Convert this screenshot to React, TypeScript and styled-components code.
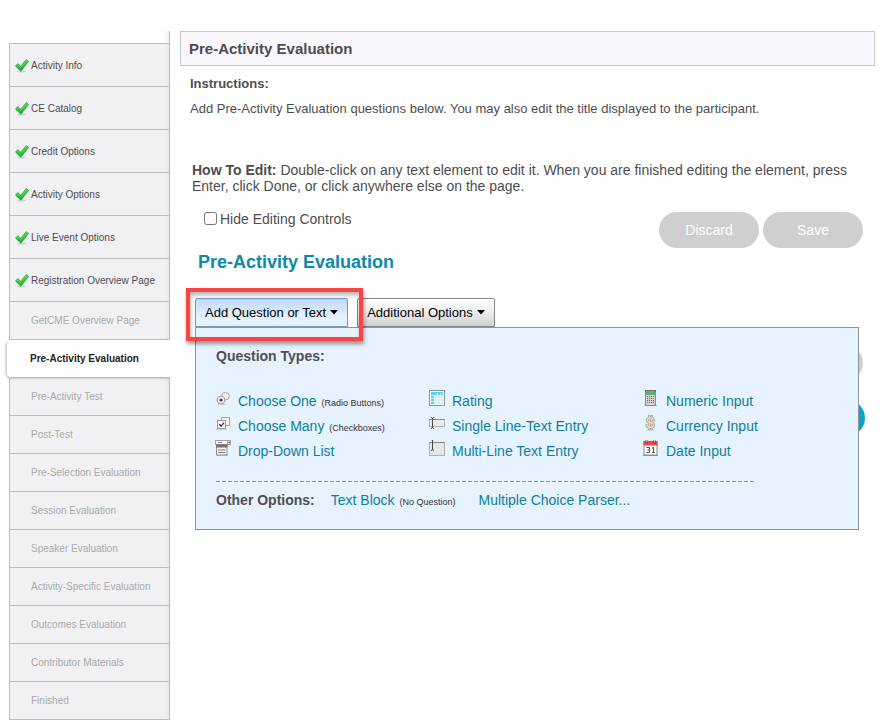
import React from "react";
import styled, { createGlobalStyle, css } from "styled-components";

const GlobalStyle = createGlobalStyle`
  *, *::before, *::after { box-sizing: border-box; }
  body {
    margin: 0;
    background: #fff;
    color: #4d4d4f;
    font-family: "Liberation Sans", Arial, sans-serif;
    font-size: 14px;
    line-height: 16px;
  }
  button, input { font-family: inherit; }
`;

const Page = styled.div`
  display: flex;
  align-items: flex-start;
  padding: 31px 7px 5px 9px;
`;

/* ---------- Sidebar ---------- */

const Sidebar = styled.nav`
  flex: 0 0 161px;
  padding-top: 12px;
  border-right: 1px solid #bdbdbf;
  background: linear-gradient(to left, #f1f1f3, #fff 5px);
`;

const StepList = styled.ol`
  margin: 0;
  padding: 0;
  list-style: none;
  border-top: 1px solid #bdbdbf;
`;

type StepState = "done" | "current" | "pending";

const Step = styled.li<{ $state: StepState }>`
  display: flex;
  height: ${(p) => (p.$state === "done" ? 43 : 38)}px;
  border-left: 1px solid #bdbdbf;
  border-bottom: 1px solid #bdbdbf;
  background: linear-gradient(to left, #e6e6e9, #f1f1f4 5px);

  ${(p) =>
    p.$state === "current" &&
    css`
      position: relative;
      margin: 0 -1px 0 -3px;
      border-left-color: #d4d4d6;
      border-radius: 5px 0 0 5px;
      background: #fff;
      box-shadow: -1px 1px 2px rgba(0, 0, 0, 0.16);
      clip-path: inset(-4px 0 -4px -4px);
    `}
`;

const StepLink = styled.a<{ $state: StepState }>`
  flex: 1;
  display: flex;
  align-items: center;
  gap: 2px;
  padding-top: ${(p) => (p.$state === "done" ? 2 : 0)}px;
  padding-left: ${(p) => ({ done: 5, current: 23, pending: 21 })[p.$state]}px;
  font-size: 10px;
  line-height: 12px;
  font-weight: ${(p) => (p.$state === "current" ? 700 : 400)};
  color: ${(p) => ({ done: "#4c4c4e", current: "#222", pending: "#a9a9ab" })[p.$state]};
  text-decoration: none;
  white-space: nowrap;
`;

/* ---------- Main column ---------- */

const Main = styled.main`
  flex: 1;
  min-width: 0;
  margin-left: 10px;
`;

const PageTitle = styled.h1`
  margin: 0;
  padding: 9px 8px 8px;
  border: 1px solid #c6c6c8;
  background: #f9f7fb;
  font-size: 15px;
  line-height: 16px;
`;

const Instructions = styled.section`
  padding: 10px 10px 0;
  font-size: 13px;
`;

const InstructionsTitle = styled.h2`
  margin: 0 0 9px;
  font-size: 13px;
  line-height: 16px;
`;

const Paragraph = styled.p`
  margin: 0;
`;

const Editor = styled.section`
  padding: 45px 12px 0;
`;

const ControlsRow = styled.div`
  display: flex;
  justify-content: space-between;
  align-items: flex-start;
  margin-top: 18px;
`;

const CheckLabel = styled.label`
  display: flex;
  align-items: flex-start;
  gap: 3px;
  padding-left: 12px;
  line-height: 14px;
`;

const CheckBox = styled.input`
  width: 13px;
  height: 13px;
  margin: 0;
`;

const PillGroup = styled.div`
  display: flex;
  justify-content: flex-end;
  gap: 4px;
`;

const Pill = styled.button<{ $primary?: boolean }>`
  width: 100px;
  height: 36px;
  border: 0;
  border-radius: 18px;
  background: ${(p) => (p.$primary ? "#0aa5c6" : "#cfcfcf")};
  color: #fff;
  font-size: 14px;
`;

const FormTitle = styled.h2`
  margin: 2px 0 0 6px;
  font-size: 18px;
  line-height: 24px;
  color: #0e89a8;
`;

const Toolbar = styled.div`
  position: relative;
  display: flex;
  gap: 9px;
  margin: 24px 4px 0 3px;
`;

const ToolbarButton = styled.button<{ $open?: boolean }>`
  display: flex;
  align-items: center;
  gap: 4px;
  height: 29px;
  padding: 0 9px;
  border: 1px solid ${(p) => (p.$open ? "#7596bf" : "#858585")};
  border-radius: 2px 2px 0 0;
  background: ${(p) =>
    p.$open
      ? "linear-gradient(#bcd9fc, #e3effd 60%, #e8f2fe)"
      : "linear-gradient(#fdfdfd, #f0f0f0 45%, #cfcfcf)"};
  color: #000;
  font-size: 13px;
  white-space: nowrap;
`;

const Highlight = styled.div`
  position: absolute;
  z-index: 2;
  top: -10px;
  left: -9px;
  width: 177px;
  height: 53px;
  border: 4px solid #fb4343;
  box-shadow: 1px 3px 4px rgba(0, 0, 0, 0.4), inset 1px 3px 4px rgba(0, 0, 0, 0.3);
  pointer-events: none;
`;

const Menu = styled.div`
  position: absolute;
  z-index: 1;
  top: 100%;
  left: 0;
  right: 0;
  padding: 20px 20px 19px;
  border: 1px solid #8f9499;
  background: #e7f2ff;
`;

const MenuTitle = styled.h3`
  margin: 0;
  font-size: 14px;
  line-height: 16px;
  color: #4f4f4f;
`;

const TypeGrid = styled.div`
  display: grid;
  grid-template-columns: 214px 214px 1fr;
  margin: 24px 0 0 -1px;
`;

const TypeList = styled.ul`
  margin: 0;
  padding: 0;
  list-style: none;
`;

const TypeItem = styled.li`
  display: flex;
  gap: 7px;
  height: 25px;
  line-height: 26px;
  white-space: nowrap;
`;

const MenuLink = styled.a`
  color: #0d7f9c;
  text-decoration: none;
`;

const Note = styled.small`
  margin-left: 1px;
  font-size: 9px;
  color: #333;
`;

const IconBox = styled.svg`
  flex: none;
  display: block;
  margin-top: 2px;
`;

const Divider = styled.hr`
  max-width: 540px;
  height: 1px;
  margin: 18px 0 10px;
  border: 0;
  background: repeating-linear-gradient(to right, #8d9299 0 4px, transparent 4px 6px);
`;

const OtherRow = styled.div`
  display: flex;
  align-items: baseline;
  white-space: nowrap;
`;

const OtherEntry = styled.span<{ $gap: number }>`
  margin-left: ${(p) => p.$gap}px;
`;

const FormActions = styled.div`
  margin-top: 18px;
`;

const PageActions = styled.div`
  margin: 19px -2px 0 0;
`;

/* ---------- Icons ---------- */

const CheckIcon = () => (
  <svg width="14" height="14" viewBox="0 0 14 14" aria-hidden="true">
    <defs>
      <linearGradient id="tick" x1="0" y1="0" x2="0" y2="1">
        <stop offset="0" stopColor="#4fd653" />
        <stop offset="1" stopColor="#14ad2d" />
      </linearGradient>
    </defs>
    <ellipse cx="6.5" cy="12.6" rx="4.5" ry="1" fill="#000" opacity=".13" />
    <path d="M.5 7 2.8 4.6l2.9 2.6L11.3.5l2.3 1.9-7.7 9.9Z" fill="url(#tick)" stroke="#1fa334" strokeWidth=".7" strokeLinejoin="round" />
    <path d="m1.7 6.9 1.2-1.2 2.8 2.7L11.6 1.6" fill="none" stroke="#7fe681" strokeWidth=".6" />
  </svg>
);

const Caret = () => (
  <svg width="8" height="5" viewBox="0 0 8 5" aria-hidden="true">
    <path d="M0 0h8L4 4.5Z" fill="#000" />
  </svg>
);

const Icon = ({ children }: { children: React.ReactNode }) => (
  <IconBox width="16" height="16" viewBox="0 0 16 16" aria-hidden="true">
    {children}
  </IconBox>
);

const RadioIcon = () => (
  <Icon>
    <ellipse cx="7" cy="14.6" rx="4.5" ry=".8" fill="#000" opacity=".12" />
    <circle cx="10.5" cy="6.2" r="3.8" fill="#f1f1f1" stroke="#a8a8a8" />
    <circle cx="6" cy="10" r="3.9" fill="#f6f6f6" stroke="#979797" />
    <circle cx="6" cy="10" r="1.6" fill="#3b3b3b" />
  </Icon>
);

const CheckboxIcon = () => (
  <Icon>
    <path d="M1 14.7h11" stroke="#000" opacity=".13" />
    <rect x="6.5" y="2.5" width="8" height="8" fill="#f3f3f3" stroke="#a6a6a6" />
    <rect x="2.5" y="5.5" width="8" height="8" fill="#fafafa" stroke="#979797" />
    <path d="m4.4 9.2 1.7 2.1 2.8-3.6" fill="none" stroke="#2f2f2f" strokeWidth="1.3" />
  </Icon>
);

const DropDownIcon = () => (
  <Icon>
    <path d="M2 15.5h11" stroke="#000" opacity=".15" />
    <rect x=".5" y=".5" width="15" height="4" fill="#fafafa" stroke="#a3a3a3" />
    <path d="M12.5.5v4" stroke="#a3a3a3" />
    <path d="M13 1.8h2.4l-1.2 1.6Z" fill="#444" />
    <rect x="1.5" y="4.5" width="10.5" height="10.5" fill="#f4f4f4" stroke="#8d8d8d" />
    <path d="M1 4.5h11.5v3H1z" fill="#747474" />
    <path d="M3 2.5h4M3 10h7.5M3 12.5h7.5" stroke="#7f7f7f" />
  </Icon>
);

const RatingIcon = () => (
  <Icon>
    <rect x=".5" y=".5" width="15" height="15" fill="#fff" stroke="#84989e" />
    <path d="M2 2h12v12H2z" fill="#cfe3ea" />
    <path d="M2 2h12v3H2zM2 2h3v12H2z" fill="#5fd0f5" />
    <path d="M5.5 5v9M8.5 3v11M11.5 3v11M2 5.5h12M2 8.5h12M2 11.5h12" stroke="#fff" strokeWidth=".8" opacity=".85" />
  </Icon>
);

const Cursor = () => (
  <path d="M2 .6q1.2 0 1.5.7.3-.7 1.5-.7M3.5 1v10M2 11.4q1.2 0 1.5-.7.3.7 1.5.7" fill="none" stroke="#4a4a4a" />
);

const SingleLineIcon = () => (
  <Icon>
    <rect x=".5" y="4.5" width="15" height="7" fill="#ececee" stroke="#b3b3b3" />
    <path d="M0 4.5h16" stroke="#8c8c8c" />
    <g transform="translate(0 2)">
      <Cursor />
    </g>
  </Icon>
);

const MultiLineIcon = () => (
  <Icon>
    <rect x=".5" y="2.5" width="15" height="13" fill="#e6e6e8" stroke="#b0b0b0" />
    <path d="M0 2.5h16" stroke="#858585" />
    <g transform="translate(0 -1)">
      <Cursor />
    </g>
  </Icon>
);

const CalculatorIcon = () => (
  <Icon>
    <path d="M1 15.5h13" stroke="#000" opacity=".22" />
    <rect x="2.5" y=".5" width="10" height="15" fill="#d2d3d2" stroke="#8b8b8b" />
    <path d="M2 1h11" stroke="#555" />
    <path d="M3 2h9v3H3z" fill="#5fae66" />
    <path
      d="M4 6h1v1H4zm2 0h1v1H6zm2 0h1v1H8zm2 0h1v1h-1zM4 8h1v1H4zm2 0h1v1H6zm2 0h1v1H8zm2 0h1v1h-1zM4 10h1v1H4zm2 0h1v1H6zm2 0h1v1H8zm2 0h1v1h-1zM4 12h1v1H4zm2 0h1v1H6zm2 0h1v1H8zm2 0h1v1h-1z"
      fill="#6f6f6f"
    />
  </Icon>
);

const DollarIcon = () => (
  <Icon>
    <path d="M3 15.2h9" stroke="#000" opacity=".12" />
    <g fill="none" strokeLinecap="round">
      <path d="M11 5Q10.5 3 7.5 3T4 5.2q0 2 3.5 2.4T11 10q0 2.4-3.5 2.4T3.6 10.2M6.3 1v13M8.8 1v13" stroke="#a39885" strokeWidth="2.4" />
      <path d="M11 5Q10.5 3 7.5 3T4 5.2q0 2 3.5 2.4T11 10q0 2.4-3.5 2.4T3.6 10.2M6.3 1v13M8.8 1v13" stroke="#e9dfcb" strokeWidth="1.2" />
    </g>
  </Icon>
);

const CalendarIcon = () => (
  <Icon>
    <path d="M0 15.5h15" stroke="#000" opacity=".4" />
    <rect x="1" y="1.5" width="13" height="13.5" fill="#fbfbfb" stroke="#8f8f8f" />
    <path d="M.5 1h14v4.5H.5z" fill="#e84a45" />
    <path d="M3.5 0v3.5M11.5 0v3.5" stroke="#8c1e1b" strokeWidth="1.8" />
    <path d="M3.5 0v2.5M11.5 0v2.5" stroke="#ffc8c4" strokeWidth=".8" />
    <path d="M3.5 7.5h3v5h-3M4.5 10h2M9 8.2l1.5-.7v5M9 12.5h3" fill="none" stroke="#555" strokeWidth="1" />
  </Icon>
);

/* ---------- Data ---------- */

const steps: { label: string; state: StepState }[] = [
  { label: "Activity Info", state: "done" },
  { label: "CE Catalog", state: "done" },
  { label: "Credit Options", state: "done" },
  { label: "Activity Options", state: "done" },
  { label: "Live Event Options", state: "done" },
  { label: "Registration Overview Page", state: "done" },
  { label: "GetCME Overview Page", state: "pending" },
  { label: "Pre-Activity Evaluation", state: "current" },
  { label: "Pre-Activity Test", state: "pending" },
  { label: "Post-Test", state: "pending" },
  { label: "Pre-Selection Evaluation", state: "pending" },
  { label: "Session Evaluation", state: "pending" },
  { label: "Speaker Evaluation", state: "pending" },
  { label: "Activity-Specific Evaluation", state: "pending" },
  { label: "Outcomes Evaluation", state: "pending" },
  { label: "Contributor Materials", state: "pending" },
  { label: "Finished", state: "pending" },
];

const questionTypes: { label: string; note?: string; Glyph: () => React.JSX.Element }[][] = [
  [
    { label: "Choose One", note: "(Radio Buttons)", Glyph: RadioIcon },
    { label: "Choose Many", note: "(Checkboxes)", Glyph: CheckboxIcon },
    { label: "Drop-Down List", Glyph: DropDownIcon },
  ],
  [
    { label: "Rating", Glyph: RatingIcon },
    { label: "Single Line-Text Entry", Glyph: SingleLineIcon },
    { label: "Multi-Line Text Entry", Glyph: MultiLineIcon },
  ],
  [
    { label: "Numeric Input", Glyph: CalculatorIcon },
    { label: "Currency Input", Glyph: DollarIcon },
    { label: "Date Input", Glyph: CalendarIcon },
  ],
];

export default function App() {
  return (
    <>
      <GlobalStyle />
      <Page>
        <Sidebar aria-label="Activity steps">
          <StepList>
            {steps.map(({ label, state }) => (
              <Step key={label} $state={state}>
                <StepLink href="#" $state={state} aria-current={state === "current" ? "step" : undefined}>
                  {state === "done" && <CheckIcon />}
                  {label}
                </StepLink>
              </Step>
            ))}
          </StepList>
        </Sidebar>

        <Main>
          <PageTitle>Pre-Activity Evaluation</PageTitle>
          <Instructions>
            <InstructionsTitle>Instructions:</InstructionsTitle>
            <Paragraph>
              Add Pre-Activity Evaluation questions below. You may also edit the title displayed to the participant.
            </Paragraph>
          </Instructions>

          <Editor>
            <Paragraph>
              <strong>How To Edit:</strong> Double-click on any text element to edit it. When you are finished editing
              the element, press Enter, click Done, or click anywhere else on the page.
            </Paragraph>
            <ControlsRow>
              <CheckLabel>
                <CheckBox type="checkbox" />
                Hide Editing Controls
              </CheckLabel>
              <PillGroup>
                <Pill type="button">Discard</Pill>
                <Pill type="button">Save</Pill>
              </PillGroup>
            </ControlsRow>

            <FormTitle>Pre-Activity Evaluation</FormTitle>

            <Toolbar>
              <ToolbarButton type="button" $open aria-expanded="true">
                Add Question or Text <Caret />
              </ToolbarButton>
              <ToolbarButton type="button" aria-expanded="false">
                Additional Options <Caret />
              </ToolbarButton>
              <Highlight />
              <Menu>
                <MenuTitle>Question Types:</MenuTitle>
                <TypeGrid>
                  {questionTypes.map((column) => (
                    <TypeList key={column[0].label}>
                      {column.map(({ label, note, Glyph }) => (
                        <TypeItem key={label}>
                          <Glyph />
                          <span>
                            <MenuLink href="#">{label}</MenuLink> {note && <Note>{note}</Note>}
                          </span>
                        </TypeItem>
                      ))}
                    </TypeList>
                  ))}
                </TypeGrid>
                <Divider />
                <OtherRow>
                  <MenuTitle>Other Options:</MenuTitle>
                  <OtherEntry $gap={16}>
                    <MenuLink href="#">Text Block</MenuLink> <Note>(No Question)</Note>
                  </OtherEntry>
                  <OtherEntry $gap={23}>
                    <MenuLink href="#">Multiple Choice Parser...</MenuLink>
                  </OtherEntry>
                </OtherRow>
              </Menu>
            </Toolbar>

            <FormActions>
              <PillGroup>
                <Pill type="button" aria-label="Preview" />
              </PillGroup>
            </FormActions>
            <PageActions>
              <PillGroup>
                <Pill type="button" $primary aria-label="Continue" />
              </PillGroup>
            </PageActions>
          </Editor>
        </Main>
      </Page>
    </>
  );
}
